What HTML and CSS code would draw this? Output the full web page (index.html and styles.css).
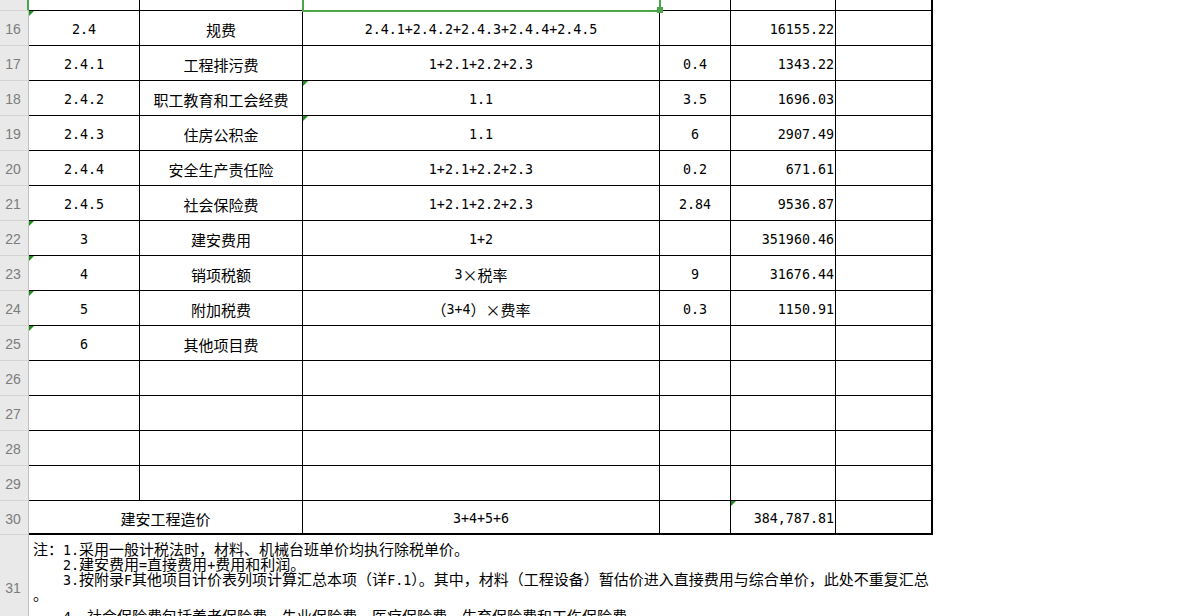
FILE: index.html
```html
<!DOCTYPE html>
<html lang="zh-CN">
<head>
<meta charset="utf-8">
<title>建安工程造价</title>
<link rel="stylesheet" href="styles.css">
</head>
<body>
<div class="sheet">
  <div class="row top">
    <div class="hd sel"></div>
    <div class="c"></div>
    <div class="c"></div>
    <div class="c"></div>
    <div class="c"></div>
    <div class="c"></div>
    <div class="c last"></div>
  </div>

  <div class="row">
    <div class="hd">16</div>
    <div class="c num"><span class="mk"></span>2.4</div>
    <div class="c">规费</div>
    <div class="c num">2.4.1+2.4.2+2.4.3+2.4.4+2.4.5</div>
    <div class="c num"></div>
    <div class="c num r">16155.22</div>
    <div class="c last"></div>
  </div>

  <div class="row">
    <div class="hd">17</div>
    <div class="c num">2.4.1</div>
    <div class="c">工程排污费</div>
    <div class="c num">1+2.1+2.2+2.3</div>
    <div class="c num">0.4</div>
    <div class="c num r">1343.22</div>
    <div class="c last"></div>
  </div>

  <div class="row">
    <div class="hd">18</div>
    <div class="c num">2.4.2</div>
    <div class="c">职工教育和工会经费</div>
    <div class="c num"><span class="mk"></span>1.1</div>
    <div class="c num">3.5</div>
    <div class="c num r">1696.03</div>
    <div class="c last"></div>
  </div>

  <div class="row">
    <div class="hd">19</div>
    <div class="c num">2.4.3</div>
    <div class="c">住房公积金</div>
    <div class="c num"><span class="mk"></span>1.1</div>
    <div class="c num">6</div>
    <div class="c num r">2907.49</div>
    <div class="c last"></div>
  </div>

  <div class="row">
    <div class="hd">20</div>
    <div class="c num">2.4.4</div>
    <div class="c">安全生产责任险</div>
    <div class="c num">1+2.1+2.2+2.3</div>
    <div class="c num">0.2</div>
    <div class="c num r">671.61</div>
    <div class="c last"></div>
  </div>

  <div class="row">
    <div class="hd">21</div>
    <div class="c num">2.4.5</div>
    <div class="c">社会保险费</div>
    <div class="c num">1+2.1+2.2+2.3</div>
    <div class="c num">2.84</div>
    <div class="c num r">9536.87</div>
    <div class="c last"></div>
  </div>

  <div class="row">
    <div class="hd">22</div>
    <div class="c num"><span class="mk"></span>3</div>
    <div class="c">建安费用</div>
    <div class="c num">1+2</div>
    <div class="c num"></div>
    <div class="c num r">351960.46</div>
    <div class="c last"></div>
  </div>

  <div class="row">
    <div class="hd">23</div>
    <div class="c num"><span class="mk"></span>4</div>
    <div class="c">销项税额</div>
    <div class="c"><span class="a">3</span><span class="fw">×</span>税率</div>
    <div class="c num">9</div>
    <div class="c num r">31676.44</div>
    <div class="c last"></div>
  </div>

  <div class="row">
    <div class="hd">24</div>
    <div class="c num"><span class="mk"></span>5</div>
    <div class="c">附加税费</div>
    <div class="c">（<span class="a">3+4</span>）<span class="fw">×</span>费率</div>
    <div class="c num">0.3</div>
    <div class="c num r">1150.91</div>
    <div class="c last"></div>
  </div>

  <div class="row">
    <div class="hd">25</div>
    <div class="c num"><span class="mk"></span>6</div>
    <div class="c">其他项目费</div>
    <div class="c"></div>
    <div class="c"></div>
    <div class="c"></div>
    <div class="c last"></div>
  </div>

  <div class="row">
    <div class="hd">26</div>
    <div class="c"></div>
    <div class="c"></div>
    <div class="c"></div>
    <div class="c"></div>
    <div class="c"></div>
    <div class="c last"></div>
  </div>

  <div class="row">
    <div class="hd">27</div>
    <div class="c"></div>
    <div class="c"></div>
    <div class="c"></div>
    <div class="c"></div>
    <div class="c"></div>
    <div class="c last"></div>
  </div>

  <div class="row">
    <div class="hd">28</div>
    <div class="c"></div>
    <div class="c"></div>
    <div class="c"></div>
    <div class="c"></div>
    <div class="c"></div>
    <div class="c last"></div>
  </div>

  <div class="row">
    <div class="hd">29</div>
    <div class="c"></div>
    <div class="c"></div>
    <div class="c"></div>
    <div class="c"></div>
    <div class="c"></div>
    <div class="c last"></div>
  </div>

  <div class="row tot">
    <div class="hd">30</div>
    <div class="c span2">建安工程造价</div>
    <div class="c num">3+4+5+6</div>
    <div class="c num"></div>
    <div class="c num r"><span class="mk"></span>384,787.81</div>
    <div class="c last"></div>
  </div>

  <div class="row notes-row">
    <div class="hd">31</div>
    <div class="notes">
      <div class="ln">注：<span class="a">1.</span>采用一般计税法时，材料、机械台班单价均执行除税单价。</div>
      <div class="ln ind"><span class="a">2.</span>建安费用<span class="a">=</span>直接费用<span class="a">+</span>费用和利润。</div>
      <div class="ln ind"><span class="a">3.</span>按附录<span class="a">F</span>其他项目计价表列项计算汇总本项（详<span class="a">F.1</span>）。其中，材料（工程设备）暂估价进入直接费用与综合单价，此处不重复汇总<br>。</div>
      <div class="ln ind l4"><span class="a">4. </span>社会保险费包括养老保险费、失业保险费、医疗保险费、生育保险费和工伤保险费。</div>
    </div>
  </div>

  <div class="selbox"></div>
  <div class="handle"></div>
</div>
</body>
</html>
```

FILE: styles.css
```css
* {
  box-sizing: border-box;
}

html, body {
  margin: 0;
  background: #ffffff;
}

body {
  font-family: "Noto Sans CJK SC", sans-serif;
  font-size: 15px;
  color: #000000;
  overflow: hidden;
}

.sheet {
  position: relative;
  width: 933px;
}

.row {
  display: grid;
  grid-template-columns: 29px 111px 163px 357px 71px 105px 97px;
  height: 35px;
}

.row.top {
  height: 11px;
}

.row.tot {
  height: 34px;
}

.row.notes-row {
  height: 105px;
}

.hd {
  background: #e9e9e9;
  border-right: 1px solid #c2c2c2;
  border-bottom: 1px solid #d4d4d4;
  color: #7c7c7c;
  font-family: "Liberation Sans", sans-serif;
  font-size: 14px;
  line-height: 15px;
  display: flex;
  align-items: center;
  justify-content: center;
  padding-top: 3px;
  padding-right: 2px;
}

.hd.sel {
  border-right: 2px solid #4ba64b;
}

.row.top .hd,
.row.top .c {
  padding-top: 0;
}

.c {
  position: relative;
  border-right: 1px solid #000000;
  border-bottom: 1px solid #000000;
  display: flex;
  align-items: center;
  justify-content: center;
  padding-top: 3px;
  line-height: 15px;
  white-space: nowrap;
}

.c.last {
  border-right-width: 2px;
}

.row.tot .c {
  border-bottom-width: 2px;
}

.c.span2 {
  grid-column: span 2;
}

.num,
.a {
  font-family: "DejaVu Sans Mono", monospace;
  font-size: 13.33px;
}

.a {
  line-height: 0;
}

.fw {
  display: inline-block;
  width: 15px;
  text-align: center;
}

.r {
  justify-content: flex-end;
  padding-right: 1px;
}

.mk {
  position: absolute;
  top: 0;
  left: 0;
  width: 0;
  height: 0;
  border-top: 5px solid #1f8f1f;
  border-right: 5px solid transparent;
}

.notes {
  grid-column: span 6;
  padding: 6px 0 0 4px;
  line-height: 15px;
  white-space: nowrap;
}

.ind {
  text-indent: 30px;
}

.l4 {
  margin-top: 7px;
}

.selbox {
  position: absolute;
  left: 302px;
  top: -5px;
  width: 359px;
  height: 17px;
  border: 2px solid #4ba64b;
}

.handle {
  position: absolute;
  left: 657px;
  top: 7px;
  width: 6px;
  height: 6px;
  background: #4ba64b;
}
```
